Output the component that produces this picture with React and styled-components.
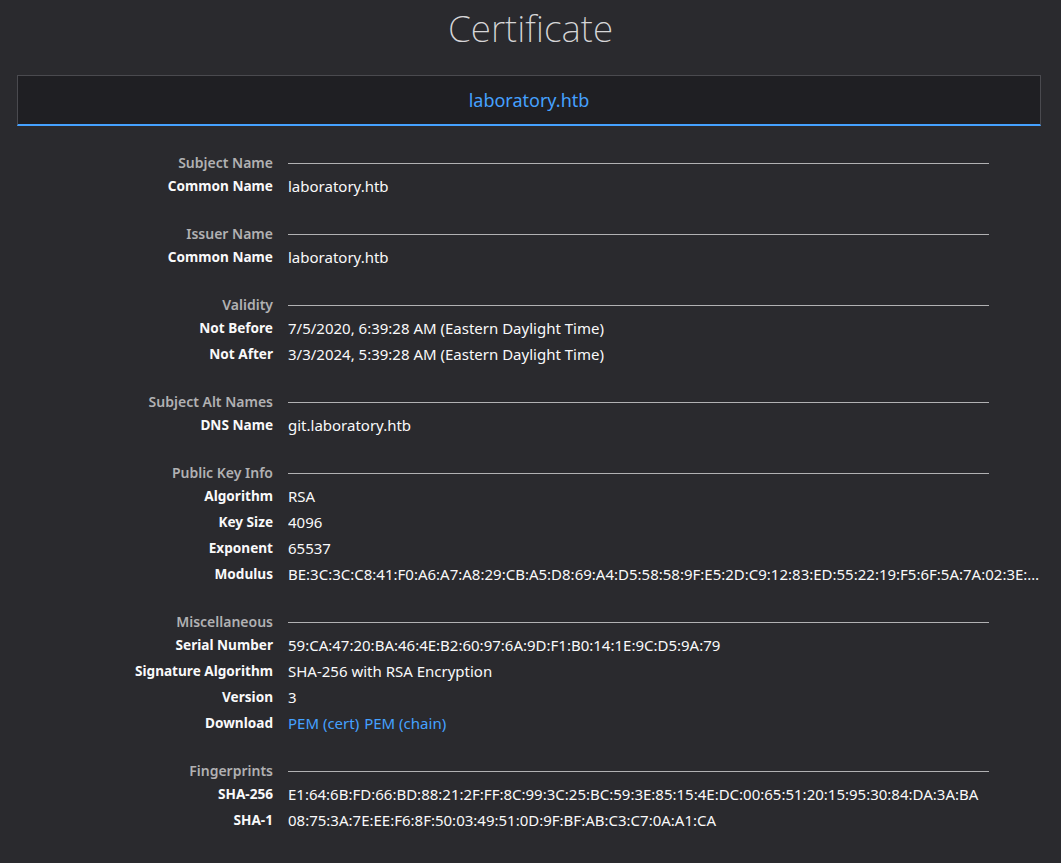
import React from "react";
import styled, { createGlobalStyle } from "styled-components";

const G = createGlobalStyle`
  body{margin:0;background:#2a2a2e;font-family:"Noto Sans",sans-serif;}
`;
const Page = styled.div`min-height:863px;background:#2a2a2e;color:#f9f9fa;`;
const Title = styled.h1`margin:0;height:58px;padding-top:2px;text-align:center;font-weight:200;font-size:37px;line-height:52px;color:#d6d6d8;font-family:"Noto Sans",sans-serif;`;
const Tab = styled.div`margin:15px 20px 0 17px;height:48px;background:#1f1f23;border:1px solid #4a4a4f;border-bottom:2px solid #45a1ff;display:flex;align-items:center;justify-content:center;color:#45a1ff;font-size:18px;`;
const Content = styled.div`padding:27px 72px 20px 15px;`;
const Section = styled.div`display:grid;grid-template-columns:258px 1fr;column-gap:15px;margin-bottom:25px;`;
const Heading = styled.div`text-align:right;color:#b1b1b3;font-weight:600;font-size:14px;height:20px;line-height:20px;`;
const Rule = styled.div`display:flex;align-items:center;&::after{content:"";flex:1;height:1px;background:#b1b1b3;}`;
const Label = styled.div`text-align:right;font-weight:700;font-size:13.6px;height:26px;line-height:26px;white-space:nowrap;`;
const Value = styled.div`font-size:15px;height:26px;line-height:26px;white-space:nowrap;overflow:hidden;text-overflow:ellipsis;color:#f9f9fa;max-width:${p=>p.wide?"752px":"none"};margin-right:${p=>p.wide?"-60px":"0"};`;
const Link = styled.a`color:#45a1ff;text-decoration:none;margin-right:5px;`;

const data=[
 ["Subject Name",[["Common Name","laboratory.htb"]]],
 ["Issuer Name",[["Common Name","laboratory.htb"]]],
 ["Validity",[["Not Before","7/5/2020, 6:39:28 AM (Eastern Daylight Time)"],["Not After","3/3/2024, 5:39:28 AM (Eastern Daylight Time)"]]],
 ["Subject Alt Names",[["DNS Name","git.laboratory.htb"]]],
 ["Public Key Info",[["Algorithm","RSA"],["Key Size","4096"],["Exponent","65537"],["Modulus","BE:3C:3C:C8:41:F0:A6:A7:A8:29:CB:A5:D8:69:A4:D5:58:58:9F:E5:2D:C9:12:83:ED:55:22:19:F5:6F:5A:7A:02:3E:11:4A",true]]],
 ["Miscellaneous",[["Serial Number","59:CA:47:20:BA:46:4E:B2:60:97:6A:9D:F1:B0:14:1E:9C:D5:9A:79"],["Signature Algorithm","SHA-256 with RSA Encryption"],["Version","3"],["Download","__links"]]],
 ["Fingerprints",[["SHA-256","E1:64:6B:FD:66:BD:88:21:2F:FF:8C:99:3C:25:BC:59:3E:85:15:4E:DC:00:65:51:20:15:95:30:84:DA:3A:BA"],["SHA-1","08:75:3A:7E:EE:F6:8F:50:03:49:51:0D:9F:BF:AB:C3:C7:0A:A1:CA"]]],
];

export default function App(){
  return <Page><G/>
    <Title>Certificate</Title>
    <Tab>laboratory.htb</Tab>
    <Content>
      {data.map(([h,rows])=><Section key={h}>
        <Heading>{h}</Heading><Rule/>
        {rows.map(([l,v,w],i)=><React.Fragment key={i}>
          <Label>{l}</Label>
          <Value wide={w}>{v==="__links"?<><Link href="#">PEM (cert)</Link><Link href="#">PEM (chain)</Link></>:v}</Value>
        </React.Fragment>)}
      </Section>)}
    </Content>
  </Page>;
}
